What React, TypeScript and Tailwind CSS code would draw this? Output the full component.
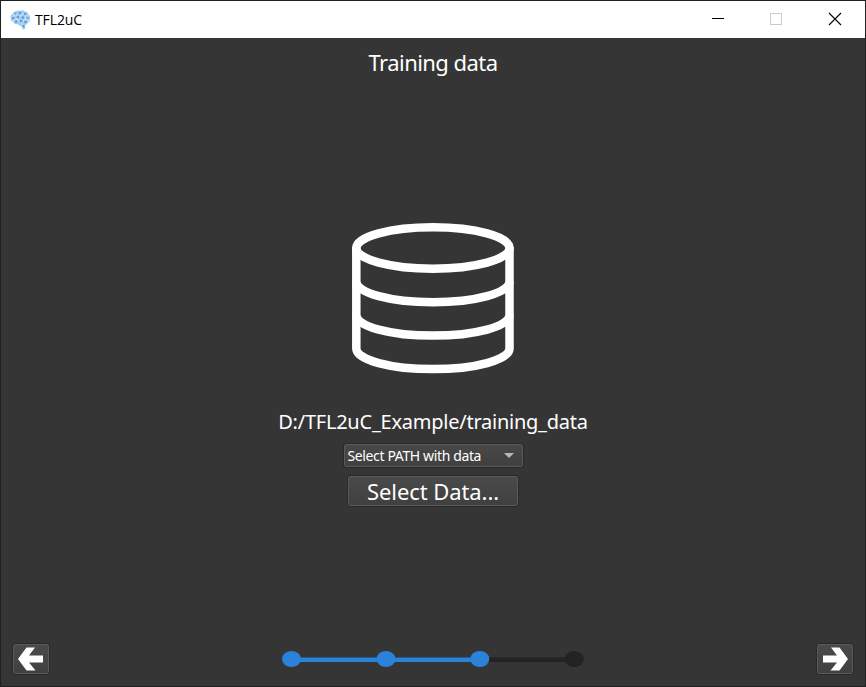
import type { ReactNode } from 'react';

function BrainIcon() {
  return (
    <svg className="h-[20px] w-[21px]" viewBox="0 0 21 20">
      <path
        d="M6 1.2Q8-.2 10 .8Q13-.4 15 1.4Q18 1.6 18.4 4.2Q20.8 6 19.8 9Q20.4 12 17.6 13Q17 15 15 15L15.4 19L12.6 19.6L11.4 16Q9 16.4 7.6 14Q4.4 14.8 3.4 12Q.4 11.400 .8 8.400Q-.2 5 2.600 4Q3.200 1.400 6 1.200Z"
        fill="#a3cdf0"
      />
      <g stroke="#dceefc" strokeWidth=".8" fill="none">
        <path d="M2 7L6 4L9 7L14 3L18 6M3 11L7 9L11 12L16 9L19 11M9 7L7 9M14 3L16 9M11 12L14 17" />
      </g>
      <g fill="#5b9bd8">
        <circle cx="5.500" cy="3.500" r="1.100" />
        <circle cx="10" cy="3" r="1.200" />
        <circle cx="15" cy="4" r="1.200" />
        <circle cx="3" cy="8" r="1.200" />
        <circle cx="8" cy="7" r="1.300" />
        <circle cx="13" cy="7.500" r="1.300" />
        <circle cx="17.500" cy="8" r="1.100" />
        <circle cx="6" cy="11.500" r="1.200" />
        <circle cx="11" cy="11" r="1.300" />
        <circle cx="15.500" cy="12" r="1.300" />
        <circle cx="13.500" cy="16" r="1.200" />
      </g>
    </svg>
  );
}

function DatabaseIcon() {
  return (
    <svg className="h-[152px] w-[164px]" viewBox="351 222 164 152" fill="none" stroke="#fff" strokeWidth="8.500">
      <ellipse cx="432.900" cy="248" rx="76.600" ry="20.700" />
      <path d="M356.300 247V348.400C356.300 359.800 390.600 369.100 432.900 369.100S509.500 359.800 509.500 348.400V247" />
      <path d="M356.300 281.500C356.300 292.900 390.600 302.200 432.900 302.200S509.500 292.900 509.500 281.500" />
      <path d="M356.300 315C356.300 326.400 390.600 335.600 432.900 335.600S509.500 326.400 509.500 315" />
    </svg>
  );
}

function ArrowButton({ label, children }: { label: string; children: ReactNode }) {
  return (
    <button
      aria-label={label}
      className="flex h-[30px] w-[36px] items-center justify-center rounded-[2px] border border-[#5a5a5a] bg-linear-to-b from-[#4a4a4a] to-[#404040] outline outline-[#292929]"
    >
      <svg className="h-[24px] w-[26px]" viewBox="0 0 26 24" fill="#fff">
        {children}
      </svg>
    </button>
  );
}

function Steps() {
  return (
    <svg className="h-[18px] w-[304px]" viewBox="281 650 304 18">
      <path d="M480 659.700H574" stroke="#232323" strokeWidth="4.600" />
      <path d="M291 659.700H480" stroke="#2a82da" strokeWidth="4.600" />
      <ellipse cx="574.300" cy="659" rx="9.500" ry="8" fill="#232323" />
      <g fill="#2a82da">
        <ellipse cx="291.500" cy="659" rx="9.500" ry="8" />
        <ellipse cx="386" cy="659" rx="9.500" ry="8" />
        <ellipse cx="479.800" cy="659" rx="9.500" ry="8" />
      </g>
    </svg>
  );
}

export default function App() {
  return (
    <div className="flex h-[687px] w-[866px] flex-col border border-[#202020] bg-[#353535] font-['Noto_Sans',sans-serif] text-white">
      <header className="flex h-[37px] shrink-0 items-center bg-white pl-[9px] text-black">
        <BrainIcon />
        <span className="ml-[4px] font-['Open_Sans',sans-serif] text-[14px] leading-[20px] tracking-[-0.1px]">TFL2uC</span>
        <svg className="ml-auto h-[37px] w-[170px]" viewBox="695 1 170 37" fill="none" shapeRendering="crispEdges">
          <path d="M712 18.500H724" stroke="#000" />
          <rect x="770.500" y="13.500" width="11" height="11" stroke="#ccc" />
          <path d="M829 13L841 25M841 13L829 25" stroke="#000" strokeWidth="1.100" shapeRendering="auto" />
        </svg>
      </header>
      <main className="flex min-h-0 flex-1 flex-col items-center">
        <h1 className="mt-[9px] h-[30px] text-[22px] leading-[30px] tracking-[-0.55px] whitespace-nowrap">Training data</h1>
        <div className="mt-[145px]">
          <DatabaseIcon />
        </div>
        <p className="mt-[33px] h-[30px] text-[20px] leading-[30px] tracking-[-0.24px] whitespace-nowrap">D:/TFL2uC_Example/training_data</p>
        <button className="mt-[7px] flex h-[23px] w-[179px] items-center justify-between rounded-[2px] border border-[#5a5a5a] bg-linear-to-b from-[#484848] to-[#404040] pr-[8px] pl-[3px] outline outline-[#292929]">
          <span className="text-[14px] leading-[20px] tracking-[-0.37px] whitespace-nowrap">Select PATH with data</span>
          <svg className="h-[5px] w-[10px]" viewBox="0 0 10 5">
            <path d="M0 0H10L5 5Z" fill="#b8b8b8" />
          </svg>
        </button>
        <button className="mt-[9px] flex h-[30px] w-[170px] items-center justify-center rounded-[2px] border border-[#5a5a5a] bg-linear-to-b from-[#4a4a4a] to-[#404040] outline outline-[#292929]">
          <span className="text-[22px] leading-[30px] tracking-[-0.08px] whitespace-nowrap">Select Data...</span>
        </button>
        <footer className="mt-auto mb-[12px] flex w-full items-center justify-between px-[12px]">
          <ArrowButton label="Previous step">
            <path d="M0 12L8.500 .5H17L11 8.500H25V15.500H11L17.500 23.500H8.500Z" />
          </ArrowButton>
          <Steps />
          <ArrowButton label="Next step">
            <path d="M26 12L17.500 .5H9L15 8.500H1V15.500H15L8.500 23.500H17.500Z" />
          </ArrowButton>
        </footer>
      </main>
    </div>
  );
}
